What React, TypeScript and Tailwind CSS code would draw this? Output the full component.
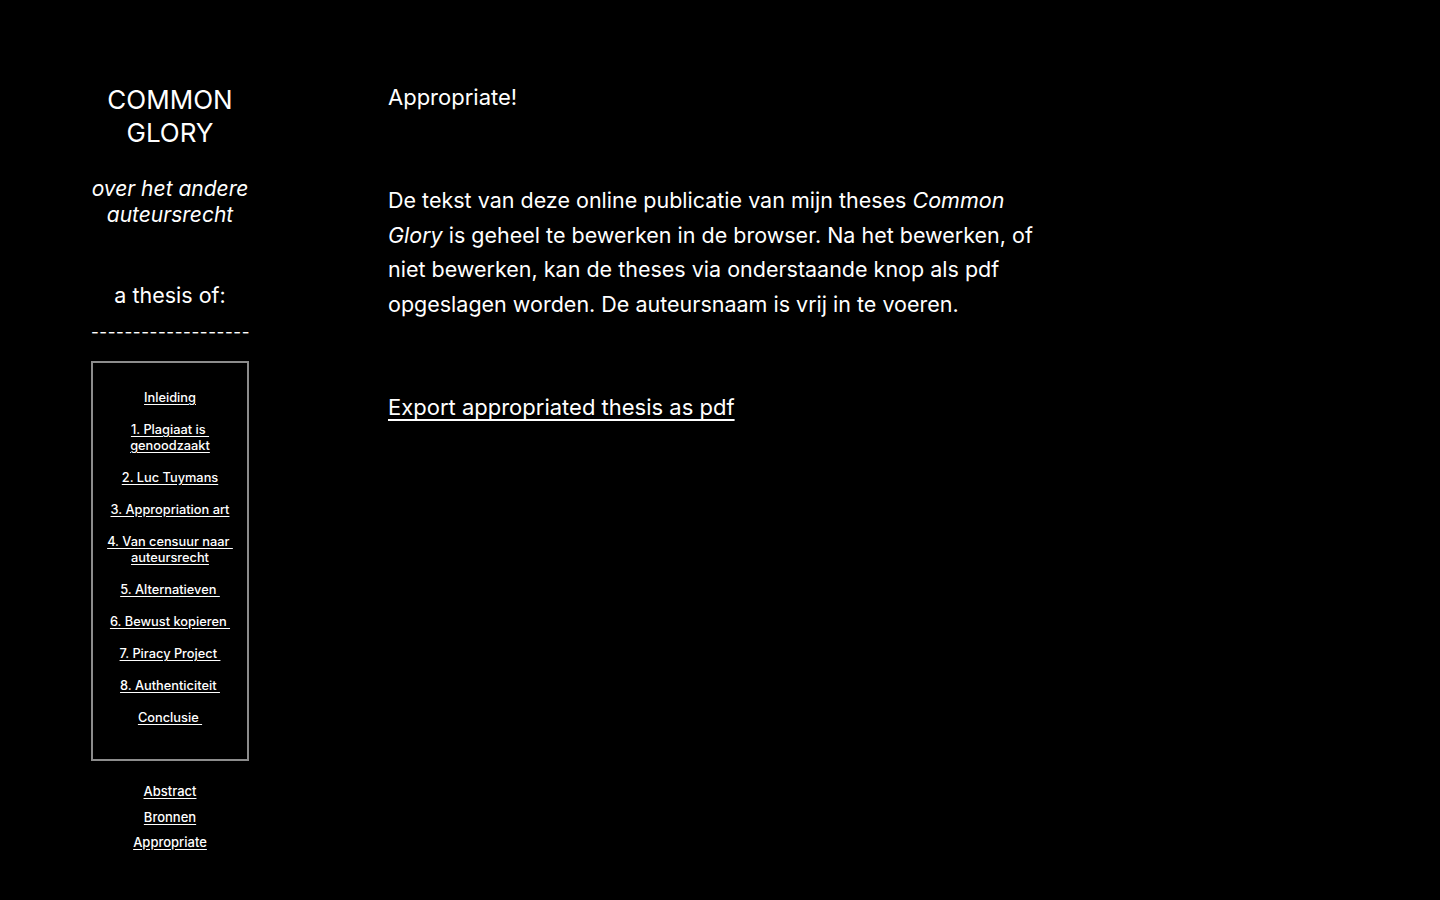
import React from "react";

const chapters: string[][] = [
  ["Inleiding"],
  ["1. Plagiaat is\u00a0", "genoodzaakt"],
  ["2. Luc Tuymans"],
  ["3. Appropriation art"],
  ["4. Van censuur naar\u00a0", "auteursrecht"],
  ["5. Alternatieven\u00a0"],
  ["6. Bewust kopieren\u00a0"],
  ["7. Piracy Project\u00a0"],
  ["8. Authenticiteit\u00a0"],
  ["Conclusie\u00a0"],
];

const extras = ["Abstract", "Bronnen", "Appropriate"];

const App = () => {
  return (
    <div
      className="min-h-screen w-full bg-black text-white"
      style={{ fontFamily: "Inter, 'Liberation Sans', sans-serif" }}
    >
      <div className="flex pl-[91px] pt-[82px]">
        {/* sidebar */}
        <aside className="flex w-[158px] shrink-0 flex-col items-center text-center">
          <h1 className="mt-[1px] text-[26px] leading-[33px] font-normal">
            COMMON
            <br />
            GLORY
          </h1>
          <p className="mt-[27px] text-[21px] leading-[26px] italic">
            over het andere auteursrecht
          </p>
          <p className="mt-[54px] text-[21.5px] leading-[26px]">a thesis of:</p>
          <div className="mt-[14px] w-full text-[17px] leading-[20px] whitespace-nowrap tracking-[0.55px]">
            -------------------
          </div>
          <nav className="mt-[19px] flex w-full flex-col items-center border-2 border-[#8c8c8c] px-[12px] pt-[27px] pb-[17px]">
            {chapters.map((lines) => (
              <a
                key={lines.join("")}
                href="#"
                className="mb-[16px] text-[12.8px] leading-[16px] font-medium underline underline-offset-[2px]"
              >
                {lines.map((l, i) => (
                  <React.Fragment key={i}>
                    {i > 0 && <br />}
                    {l}
                  </React.Fragment>
                ))}
              </a>
            ))}
          </nav>
          <div className="mt-[22px] flex flex-col items-center gap-[9px]">
            {extras.map((e) => (
              <a
                key={e}
                href="#"
                className="text-[13px] leading-[16.5px] font-medium underline underline-offset-[2px]"
              >
                {e}
              </a>
            ))}
          </div>
        </aside>

        {/* main */}
        <main className="ml-[139px] w-[650px] pt-[1px]">
          <h2 className="text-[22px] leading-[28px] font-normal">Appropriate!</h2>
          <p className="mt-[72px] text-[21.5px] leading-[34.5px]">
            De tekst van deze online publicatie van mijn theses <em>Common Glory</em>{" "}
            is geheel te bewerken in de browser. Na het bewerken, of niet bewerken,
            kan de theses via onderstaande knop als pdf opgeslagen worden. De
            auteursnaam is vrij in te voeren.
          </p>
          <a
            href="#"
            className="mt-[69px] inline-block text-[22px] leading-[34.5px] underline underline-offset-[4px]"
          >
            Export appropriated thesis as pdf
          </a>
        </main>
      </div>
    </div>
  );
};

export default App;
